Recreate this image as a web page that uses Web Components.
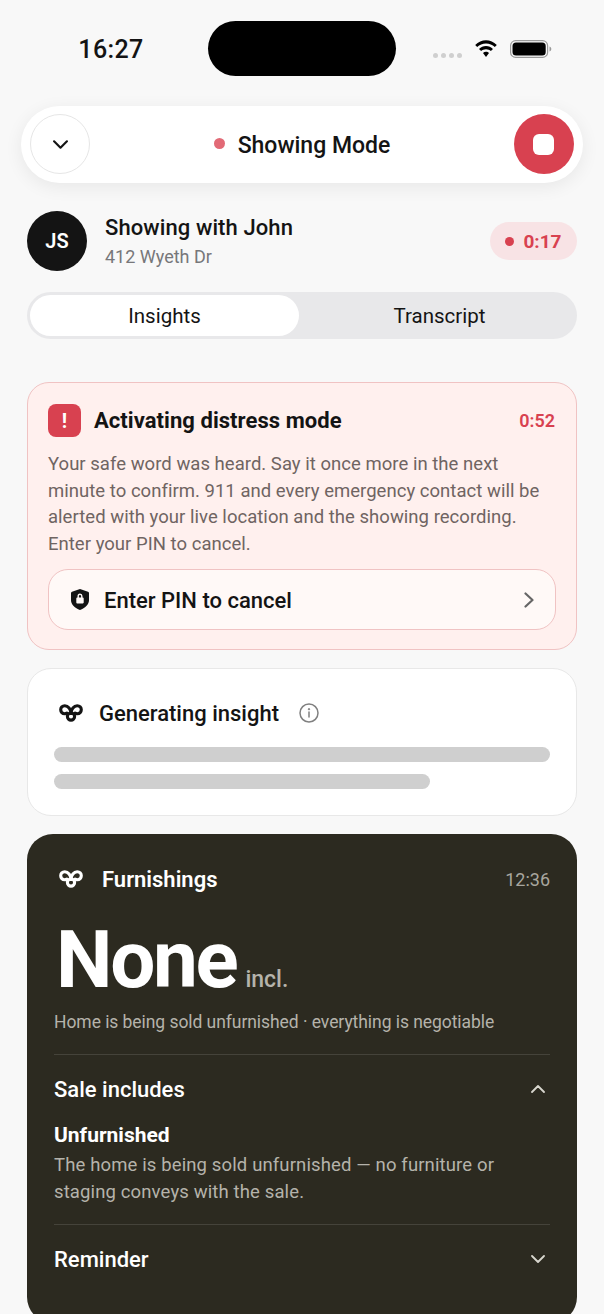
<!DOCTYPE html>
<html>
<head>
<meta charset="utf-8">
<style>
	html, body { margin: 0; height: 100%; overflow: hidden; }
	body {
		background: #f8f8f8;
		font-family: Roboto, "Liberation Sans", sans-serif;
		color: #141414;
	}
	#page { display: flex; flex-direction: column; }
</style>
</head>
<body>

<template id="knot">
	<svg viewBox="0 0 24 18" width="24" height="18" fill="none" stroke="currentColor" stroke-width="3.1" stroke-linecap="round">
		<path d="M12 9.500C12 5 9 1.700 5.800 1.700 3.300 1.700 1.700 3.500 1.700 5.800c0 2.300 1.700 4 3.900 4 .9 0 1.700-.3 2.300-.7"/>
		<path d="M12 9.500C12 5 15 1.700 18.200 1.700c2.500 0 4.100 1.800 4.100 4.100 0 2.300-1.700 4-3.900 4-.9 0-1.700-.3-2.300-.7"/>
		<circle cx="12" cy="12.500" r="3.600"/>
	</svg>
</template>

<div id="page">
	<status-bar time="16:27"></status-bar>
	<mode-pill label="Showing Mode"></mode-pill>
	<showing-head initials="JS" title="Showing with John" address="412 Wyeth Dr" timer="0:17"></showing-head>
	<seg-tabs first="Insights" second="Transcript"></seg-tabs>
	<alert-card title="Activating distress mode" time="0:52" action="Enter PIN to cancel">Your safe word was heard. Say it once more in the next<br>minute to confirm. 911 and every emergency contact will be<br>alerted with your live location and the showing recording.<br>Enter your PIN to cancel.</alert-card>
	<insight-card title="Generating insight"></insight-card>
	<dark-card title="Furnishings" time="12:36" value="None" unit="incl." summary="Home is being sold unfurnished · everything is negotiable">
		<fold-row label="Sale includes" open>
			<b>Unfurnished</b>
			The home is being sold unfurnished — no furniture or<br>staging conveys with the sale.
		</fold-row>
		<fold-row label="Reminder"></fold-row>
	</dark-card>
</div>

<script>
	(function() {
		// shared chevron, points down unless flipped with css
		const chevron = (w, h, sw) => `<svg viewBox="0 0 14 8" width="${w}" height="${h}" fill="none" stroke="currentColor" stroke-width="${sw}" stroke-linecap="round" stroke-linejoin="round"><path d="M1 1l6 6 6-6"/></svg>`;
		const knot = () => document.getElementById('knot').innerHTML;

		class Base extends HTMLElement {
			constructor() {
				super();
				this.attachShadow({mode: 'open'});
			}
			attr(name) {
				return this.getAttribute(name) || '';
			}
			connectedCallback() {
				this.shadowRoot.innerHTML = this.render();
			}
		}

		class StatusBar extends Base {
			render() {
				return `<style>
					:host { display: block; height: 106px; }
					.bar { display: grid; grid-template-columns: 208px 188px 1fr; padding-top: 21px; }
					.time { font-size: 25px; font-weight: 500; text-align: center; padding: 14px 0 0 14px; letter-spacing: .4px; }
					.island { height: 55px; border-radius: 28px; background: #000; }
					.right { display: flex; align-items: center; height: 55px; padding: 0 0 0 37px; }
					.dots { display: flex; gap: 3px; margin: 14px 12px 0 0; }
					.dots i { width: 5px; height: 5px; border-radius: 50%; background: #cfcfcf; }
					.batt { margin-left: 12px; }
				</style>
				<div class="bar">
					<div class="time">${this.attr('time')}</div>
					<div class="island"></div>
					<div class="right">
						<div class="dots"><i></i><i></i><i></i><i></i></div>
						<svg width="24" height="18" viewBox="0 0 24 18" fill="#000">
							<path d="M12 3.6c3.4 0 6.5 1.3 8.8 3.5l2-2.2C19.800 2 16 .3 12 .3S4.200 2 1.200 4.900l2 2.200C5.500 4.900 8.600 3.600 12 3.600z"/>
							<path d="M12 9.200c1.900 0 3.600.7 4.900 1.900l2.100-2.200C17.100 7.100 14.700 6 12 6S6.900 7.100 5 8.900l2.100 2.200c1.300-1.200 3-1.900 4.900-1.900z"/>
							<path d="M12 11.700c-1.200 0-2.200.5-3 1.200l3 4.100 3-4.100c-.8-.7-1.800-1.200-3-1.200z"/>
						</svg>
						<svg class="batt" width="42" height="18" viewBox="0 0 42 18">
							<rect x=".6" y=".6" width="37" height="16.800" rx="5" fill="none" stroke="#9a9a9a" stroke-width="1.200"/>
							<rect x="2.500" y="2.500" width="33.200" height="13" rx="3.500" fill="#000"/>
							<path d="M39.500 6.500c1.300.4 1.800 1.300 1.800 2.500s-.5 2.100-1.800 2.500z" fill="#9a9a9a"/>
						</svg>
					</div>
				</div>`;
			}
		}

		class ModePill extends Base {
			render() {
				return `<style>
					:host { display: block; margin: 0 21px; }
					.pill {
						height: 77px; border-radius: 39px; background: #fff; box-sizing: border-box;
						box-shadow: 0 4px 18px rgba(0,0,0,.07);
						display: flex; align-items: flex-start; justify-content: space-between; padding: 8px 9px 0;
					}
					.btn { width: 60px; height: 60px; border-radius: 50%; box-sizing: border-box; display: flex; align-items: center; justify-content: center; }
					.down { border: 1.5px solid #e6e6e6; color: #141414; }
					.stop { background: #d84150; }
					.stop i { width: 21px; height: 21px; border-radius: 6px; background: #fff; }
					.label { display: flex; align-items: center; gap: 13px; height: 60px; padding-top: 3px; box-sizing: border-box; font-size: 23px; font-weight: 500; color: #141414; }
					.label i { width: 11px; height: 11px; border-radius: 50%; background: #e26a76; margin-top: -5px; }
				</style>
				<div class="pill">
					<div class="btn down">${chevron(15, 9, 2)}</div>
					<div class="label"><i></i><span>${this.attr('label')}</span></div>
					<div class="btn stop"><i></i></div>
				</div>`;
			}
		}

		class ShowingHead extends Base {
			render() {
				return `<style>
					:host { display: block; margin: 28px 27px 0; }
					.row { display: flex; align-items: center; }
					.avatar { width: 60px; height: 60px; border-radius: 50%; background: #141414; color: #fff; font-size: 20px; font-weight: 600; display: flex; align-items: center; justify-content: center; flex: none; }
					.who { flex: 1; margin-left: 18px; display: flex; flex-direction: column; gap: 3px; }
					.name { font-size: 22px; font-weight: 500; line-height: 28px; letter-spacing: .1px; }
					.addr { font-size: 18px; line-height: 24px; color: #77777a; }
					.timer { height: 38px; width: 87px; border-radius: 19px; background: #f8e3e5; color: #d84150; font-size: 19px; font-weight: 700; display: flex; align-items: center; justify-content: center; gap: 9px; box-sizing: border-box; }
					.timer i { width: 9px; height: 9px; border-radius: 50%; background: #d84150; }
				</style>
				<div class="row">
					<div class="avatar">${this.attr('initials')}</div>
					<div class="who"><div class="name">${this.attr('title')}</div><div class="addr">${this.attr('address')}</div></div>
					<div class="timer"><i></i><span>${this.attr('timer')}</span></div>
				</div>`;
			}
		}

		class SegTabs extends Base {
			render() {
				return `<style>
					:host { display: block; margin: 21px 27px 0; }
					.tabs { height: 47px; border-radius: 24px; background: #e8e8ea; padding: 3px; box-sizing: border-box; display: grid; grid-template-columns: 269px 1fr; font-size: 20.500px; }
					.tabs div { display: flex; align-items: center; justify-content: center; border-radius: 21px; }
					.on { background: #fff; }
					.on + div { padding-left: 6px; }
				</style>
				<div class="tabs"><div class="on">${this.attr('first')}</div><div>${this.attr('second')}</div></div>`;
			}
		}

		class AlertCard extends Base {
			render() {
				return `<style>
					:host { display: block; margin: 43px 27px 0; }
					.card { background: #fff0ee; border: 1.5px solid #f0c3c3; border-radius: 22px; padding: 21px 20px 20px; box-sizing: border-box; height: 268px; }
					.top { display: flex; align-items: center; height: 33px; }
					.mark { width: 33px; height: 33px; border-radius: 8px; background: #d84150; color: #fff; font-size: 20px; font-weight: 700; display: flex; align-items: center; justify-content: center; flex: none; }
					.title { flex: 1; margin-left: 13px; font-size: 22px; font-weight: 700; letter-spacing: .05px; }
					.time { font-size: 18px; font-weight: 600; color: #d84150; margin-right: 1px; }
					.text { margin-top: 14px; font-size: 18.500px; line-height: 26.500px; color: #6f6462; letter-spacing: .03px; white-space: nowrap; }
					.action { margin-top: 12px; height: 61px; border: 1.5px solid #f0c3c3; border-radius: 20px; background: #fff9f7; box-sizing: border-box; display: flex; align-items: center; padding: 2px 21px 0 22px; font-size: 22px; font-weight: 500; }
					.action span { flex: 1; margin-left: 15px; }
					.action svg:last-child { color: #666; margin-top: -2px; }
					.action svg:first-child { margin-top: -2px; }
				</style>
				<div class="card">
					<div class="top"><div class="mark">!</div><div class="title">${this.attr('title')}</div><div class="time">${this.attr('time')}</div></div>
					<div class="text"><slot></slot></div>
					<div class="action">
						<svg width="18" height="21" viewBox="0 0 18 21"><path fill-rule="evenodd" d="M9 0l8 2.800c.6.200 1 .8 1 1.400v7c0 4.200-4 7.800-9 9.800-5-2-9-5.600-9-9.800v-7c0-.6.400-1.200 1-1.400zM6.500 8.500V7a2.500 2.500 0 015 0v1.500h.3c.5 0 .9.400.9.900v4.200c0 .5-.4.900-.9.900H6.200c-.5 0-.9-.4-.9-.9V9.400c0-.5.400-.9.900-.9zm1.400 0h2.200V7a1.100 1.100 0 00-2.200 0z" fill="#141414"/></svg>
						<span>${this.attr('action')}</span>
						<svg width="10" height="16" viewBox="0 0 10 16" fill="none" stroke="currentColor" stroke-width="2.200" stroke-linecap="round" stroke-linejoin="round"><path d="M1.500 1.500L8.500 8l-7 6.500"/></svg>
					</div>
				</div>`;
			}
		}

		class InsightCard extends Base {
			render() {
				return `<style>
					:host { display: block; margin: 18px 27px 0; }
					.card { height: 148px; background: #fff; border: 1.5px solid #e8e8e8; border-radius: 24px; box-sizing: border-box; padding: 30px 26px 0; }
					.top { display: flex; align-items: center; height: 28px; padding-left: 5px; font-size: 22px; font-weight: 500; color: #141414; }
					.top span { margin: 0 20px 0 16px; }
					.bar { height: 15px; border-radius: 8px; background: #cfcfcf; }
					.bar.a { margin-top: 20px; }
					.bar.b { margin-top: 12px; width: 376px; }
				</style>
				<div class="card">
					<div class="top">${knot()}<span>${this.attr('title')}</span>
						<svg width="20" height="20" viewBox="0 0 20 20" fill="none" stroke="#808080" stroke-width="1.500"><circle cx="10" cy="10" r="9"/><path d="M10 9v5" stroke-linecap="round"/><circle cx="10" cy="6.200" r=".7" fill="#808080" stroke-width="1"/></svg>
					</div>
					<div class="bar a"></div>
					<div class="bar b"></div>
				</div>`;
			}
		}

		class DarkCard extends Base {
			render() {
				return `<style>
					:host { display: block; margin: 18px 27px 0; }
					.card { background: #2c2a20; border-radius: 26px; padding: 32px 27px 30px; color: #fff; }
					.top { display: flex; align-items: center; height: 26px; padding-left: 5px; font-size: 22px; font-weight: 600; }
					.top span { flex: 1; margin-left: 19px; }
					.top em { font-style: normal; font-size: 18px; font-weight: 400; color: #a8a69e; }
					.big { display: flex; align-items: baseline; margin: 23px 0 0 2px; height: 86px; line-height: 91px; font-size: 80px; font-weight: 700; letter-spacing: -2.300px; }
					.big small { font-size: 23px; font-weight: 500; letter-spacing: 0; color: #b5b3ab; margin-left: 9px; }
					.sum { margin-top: 9px; font-size: 17.500px; line-height: 24px; color: #b5b3ab; padding-bottom: 20px; letter-spacing: -.06px; white-space: nowrap; }
				</style>
				<div class="card">
					<div class="top">${knot()}<span>${this.attr('title')}</span><em>${this.attr('time')}</em></div>
					<div class="big">${this.attr('value')}<small>${this.attr('unit')}</small></div>
					<div class="sum">${this.attr('summary')}</div>
					<slot></slot>
				</div>`;
			}
		}

		class FoldRow extends Base {
			render() {
				const open = this.hasAttribute('open');
				return `<style>
					:host { display: block; border-top: 1.500px solid #45433a; }
					.head { display: flex; align-items: center; justify-content: space-between; height: 68px; font-size: 22px; font-weight: 500; color: #fff; }
					.head span:last-child { display: flex; margin-right: 5px; color: #d8d6ce; }
					.head svg.up { transform: rotate(180deg); }
					.body { font-size: 18.500px; line-height: 27px; color: #b5b3ab; padding: 0 0 18px; letter-spacing: .13px; white-space: nowrap; }
					::slotted(b) { display: block; font-size: 21px; line-height: 30px; font-weight: 700; color: #fff; letter-spacing: 0; margin: -3px 0 2px; }
				</style>
				<div class="head"><span>${this.attr('label')}</span><span>${chevron(14, 8, 1.8).replace('<svg', open ? '<svg class="up"' : '<svg')}</span></div>
				${open ? '<div class="body"><slot></slot></div>' : ''}`;
			}
		}

		customElements.define('status-bar', StatusBar);
		customElements.define('mode-pill', ModePill);
		customElements.define('showing-head', ShowingHead);
		customElements.define('seg-tabs', SegTabs);
		customElements.define('alert-card', AlertCard);
		customElements.define('insight-card', InsightCard);
		customElements.define('dark-card', DarkCard);
		customElements.define('fold-row', FoldRow);
	})();
</script>
</body>
</html>
